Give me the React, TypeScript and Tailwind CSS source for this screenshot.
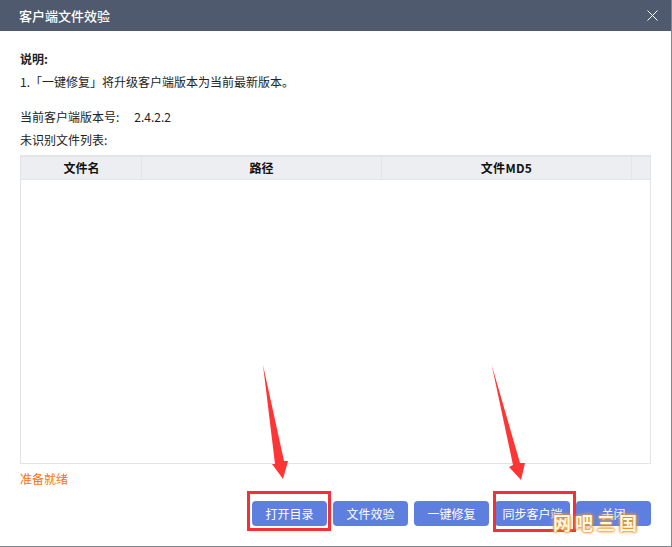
import React from 'react';

const BUTTONS = ['打开目录', '文件效验', '一键修复', '同步客户端', '关闭'];

const COLUMNS = [
  { label: '文件名', width: 'w-[121px] pl-[1px]' },
  { label: '路径', width: 'w-[240px]' },
  { label: '文件MD5', width: 'w-[250px] tracking-[0.3px]' },
  { label: '', width: 'flex-1' },
];

function Arrow({ className, points }: { className: string; points: string }) {
  return (
    <svg className={`absolute ${className}`} width="60" height="125" viewBox="0 0 60 125">
      <polygon points={points} fill="#fd3535" />
    </svg>
  );
}

export default function App() {
  return (
    <div className="relative flex h-[547px] w-[672px] flex-col overflow-hidden border-r border-b border-[#7d8699] bg-white font-['Noto_Sans_CJK_SC',sans-serif] text-xs text-[#222]">
      <div className="flex h-[31px] shrink-0 items-center justify-between bg-[#505a6e] pr-[13px] pl-[19px] text-white">
        <span className="text-[13px] font-medium">客户端文件效验</span>
        <svg width="11" height="11" viewBox="0 0 11 11" className="mb-[1px]">
          <path d="M0.5 0.5 10.5 10.5M10.5 0.5 0.5 10.5" stroke="#fff" strokeWidth="1" fill="none" />
        </svg>
      </div>

      <div className="flex min-h-0 flex-1 flex-col px-5">
        <div className="mt-[19px] leading-[18px] font-bold">说明:</div>
        <div className="mt-[5px] leading-[18px]">1.「一键修复」将升级客户端版本为当前最新版本。</div>
        <div className="mt-[17px] flex leading-[18px]">
          <span>当前客户端版本号:</span>
          <span className="ml-[15px]">2.4.2.2</span>
        </div>
        <div className="mt-[5px] leading-[18px]">未识别文件列表:</div>

        <div className="mt-[6px] flex h-[309px] w-[631px] flex-col border-t-2 border-r border-b border-l border-[#e3e4e8]">
          <div className="flex h-[23px] shrink-0 border-b border-[#e3e4e8] bg-[#edeef2]">
            {COLUMNS.map((col, i) => (
              <div
                key={i}
                className={`flex items-center justify-center border-r border-[#e3e4e8] font-bold text-[#111] last:border-r-0 ${col.width}`}
              >
                {col.label}
              </div>
            ))}
          </div>
        </div>

        <div className="mt-[6px] leading-[18px] text-[#ff7010]">准备就绪</div>

        <div className="mt-[13px] flex justify-end gap-[6px]">
          {BUTTONS.map((label) => (
            <button
              key={label}
              className="h-[25px] w-[75px] rounded-[4px] bg-[#5f7fe0] text-xs text-white"
            >
              {label}
            </button>
          ))}
        </div>
      </div>

      {/* annotations drawn on top of the screenshot */}
      <div className="absolute top-[491px] left-[247px] h-[40px] w-[84px] border-[3px] border-[#f53034]" />
      <div className="absolute top-[491px] left-[493px] h-[41px] w-[83px] border-[3px] border-[#f53034]" />
      <Arrow className="top-[364px] left-[250px]" points="13,1 34,97 38,97 33,115 22,100 25,100" />
      <Arrow className="top-[364px] left-[478px]" points="13.7,1 42,99 47,99 43,116 31,103 35,101" />

      <div className="absolute top-[509px] left-[553px] text-[18px] leading-[26px] font-bold tracking-[4px] whitespace-nowrap text-[#fff8e6] [text-shadow:0_0_1px_#e08a20,0_0_2px_#e08a20,0_0_3px_#e8962c,0_0_4px_#f0b060]">
        网吧三国
      </div>
    </div>
  );
}
